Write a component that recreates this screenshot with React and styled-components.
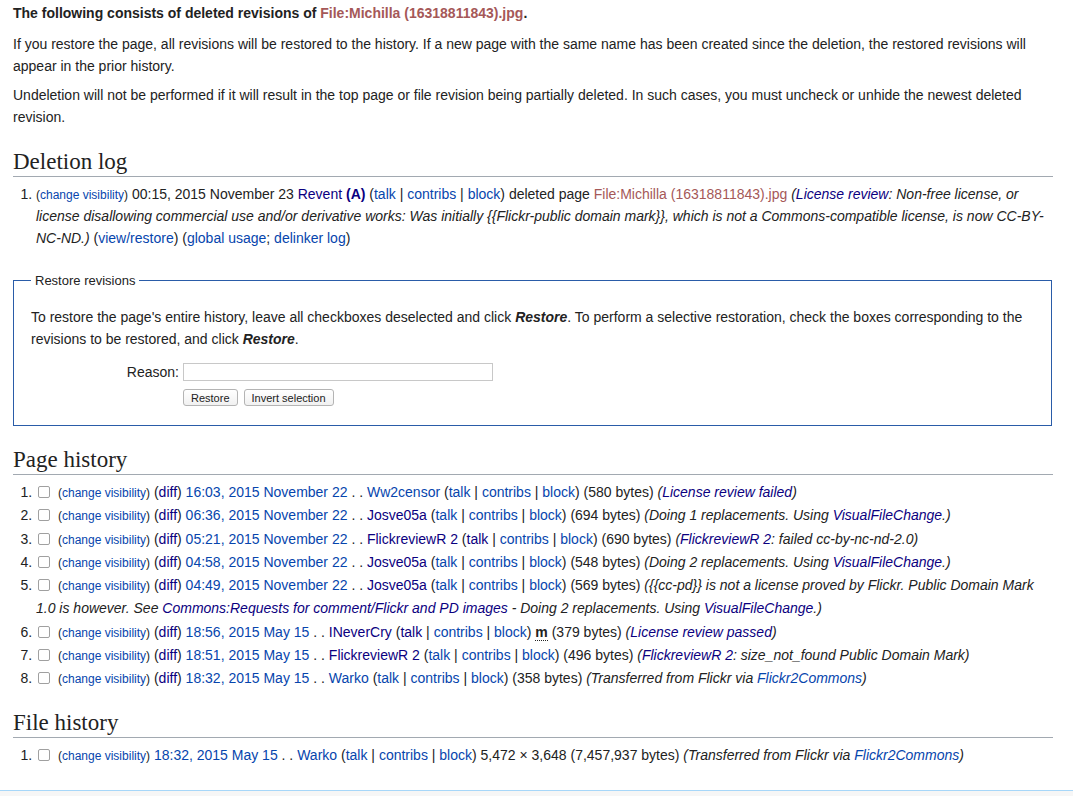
import React from "react";
import styled, { createGlobalStyle } from "styled-components";

const GlobalStyle = createGlobalStyle`
  body {
    margin: 0;
    background: #fff;
    color: #222;
    font-family: "Liberation Sans", Arial, sans-serif;
    font-size: 14px;
  }
`;

const Page = styled.div`
  min-height: 796px;
  display: flex;
  flex-direction: column;
`;

const Content = styled.div`
  padding: 2px 20px 0 13px;
`;

const Intro = styled.p`
  margin: 0 0 ${(p) => (p.$first ? "9px" : "7px")};
  line-height: 22px;
  font-weight: ${(p) => (p.$bold ? "bold" : "normal")};
`;

const Heading = styled.h2`
  font-family: "Liberation Serif", "Times New Roman", serif;
  font-weight: normal;
  font-size: 23px;
  line-height: 28px;
  margin: ${(p) => p.$top || "20px"} 0 6px;
  padding: 0;
  border-bottom: 1px solid #a2a9b1;
`;

const List = styled.ol`
  margin: 0;
  padding-left: 23px;
`;

const Item = styled.li`
  line-height: ${(p) => (p.$tall ? "23.25px" : "22px")};
`;

const A = styled.a`
  color: ${(p) => (p.$visited ? "#0b0080" : p.$red ? "#a55858" : "#0645ad")};
  text-decoration: none;
  font-weight: ${(p) => (p.$bold ? "bold" : "inherit")};
`;

const Small = styled.span`
  font-size: 12px;
  line-height: 1;
`;

const Summary = styled.span`
  font-style: italic;
`;

const Minor = styled.abbr`
  font-weight: bold;
  text-decoration: none;
  border-bottom: 1px dotted #222;
  line-height: 1;
`;

const Check = styled.span`
  display: inline-block;
  width: 10px;
  height: 10px;
  border: 1px solid #a0a0a0;
  border-radius: 2px;
  background: #fff;
  vertical-align: -1px;
  margin: 0 8px 0 2px;
`;

const Fieldset = styled.fieldset`
  margin: 24px 1px 0 0;
  border: 1px solid #2a5ca8;
  padding: 18px 17px 19px;
`;

const Legend = styled.legend`
  font-size: 13px;
  padding: 0 4px;
  margin-left: 0;
`;

const FieldText = styled.p`
  margin: 0 0 13px;
  line-height: 22px;
`;

const FormGrid = styled.div`
  display: grid;
  grid-template-columns: 148px auto;
  column-gap: 4px;
  row-gap: 8px;
  align-items: center;
`;

const Label = styled.label`
  text-align: right;
`;

const TextInput = styled.input`
  width: 306px;
  height: 14px;
  border: 1px solid #c8c8c8;
  padding: 1px;
  margin: 0;
`;

const Buttons = styled.div`
  grid-column: 2;
  display: flex;
  gap: 6px;
`;

const Button = styled.button`
  font-family: "Liberation Sans", Arial, sans-serif;
  font-size: 11px;
  height: 17px;
  padding: 0 7px;
  border: 1px solid #b4b4b4;
  border-radius: 3px;
  background: linear-gradient(#fff, #f1f1f1);
  color: #222;
`;

const Footer = styled.div`
  margin-top: auto;
  height: 5px;
  border-top: 1px solid #a7d7f9;
  background: #f6f6f6;
`;

const UserLinks = ({ talkVisited }) => (
  <>
    (<A href="#" $visited={talkVisited}>talk</A> | <A href="#">contribs</A> | <A href="#">block</A>)
  </>
);

const rows = [
  { time: "16:03, 2015 November 22", user: "Ww2censor", bytes: "580", summary: <>(<A href="#" $visited>License review failed</A>)</> },
  { time: "06:36, 2015 November 22", user: "Josve05a", uv: true, bytes: "694", summary: <>(Doing 1 replacements. Using <A href="#" $visited>VisualFileChange</A>.)</> },
  { time: "05:21, 2015 November 22", user: "FlickreviewR 2", uv: true, tv: true, bytes: "690", summary: <>(<A href="#" $visited>FlickreviewR 2</A>: failed cc-by-nc-nd-2.0)</> },
  { time: "04:58, 2015 November 22", user: "Josve05a", uv: true, bytes: "548", summary: <>(Doing 2 replacements. Using <A href="#" $visited>VisualFileChange</A>.)</> },
  {
    time: "04:49, 2015 November 22", user: "Josve05a", uv: true, bytes: "569",
    summary: <>({"{{cc-pd}}"} is not a license proved by Flickr. Public Domain Mark 1.0 is however. See <A href="#" $visited>Commons:Requests for comment/Flickr and PD images</A> - Doing 2 replacements. Using <A href="#" $visited>VisualFileChange</A>.)</>,
  },
  { time: "18:56, 2015 May 15", user: "INeverCry", uv: true, tv: true, minor: true, bytes: "379", summary: <>(<A href="#" $visited>License review passed</A>)</> },
  { time: "18:51, 2015 May 15", user: "FlickreviewR 2", uv: true, bytes: "496", summary: <>(<A href="#" $visited>FlickreviewR 2</A>: size_not_found Public Domain Mark)</> },
  { time: "18:32, 2015 May 15", user: "Warko", bytes: "358", summary: <>(Transferred from Flickr via <A href="#">Flickr2Commons</A>)</> },
];

export default function App() {
  return (
    <Page>
      <GlobalStyle />
      <Content>
        <Intro $bold $first>
          The following consists of deleted revisions of <A href="#" $red>File:Michilla (16318811843).jpg</A>.
        </Intro>
        <Intro>
          If you restore the page, all revisions will be restored to the history. If a new page with the same name has been created since the deletion, the restored revisions will appear in the prior history.
        </Intro>
        <Intro>
          Undeletion will not be performed if it will result in the top page or file revision being partially deleted. In such cases, you must uncheck or unhide the newest deleted revision.
        </Intro>

        <Heading>Deletion log</Heading>
        <List>
          <Item>
            <Small>(<A href="#">change visibility</A>)</Small> 00:15, 2015 November 23 <A href="#" $visited>Revent</A>{" "}
            <A href="#" $visited $bold>(A)</A> <UserLinks /> deleted page{" "}
            <A href="#" $red>File:Michilla (16318811843).jpg</A>{" "}
            <Summary>
              (<A href="#" $visited>License review</A>: Non-free license, or license disallowing commercial use and/or derivative works: Was initially {"{{Flickr-public domain mark}}"}, which is not a Commons-compatible license, is now CC-BY-NC-ND.)
            </Summary>{" "}
            (<A href="#">view/restore</A>) (<A href="#">global usage</A>; <A href="#">delinker log</A>)
          </Item>
        </List>

        <Fieldset>
          <Legend>Restore revisions</Legend>
          <FieldText>
            To restore the page's entire history, leave all checkboxes deselected and click <b><i>Restore</i></b>. To perform a selective restoration, check the boxes corresponding to the revisions to be restored, and click <b><i>Restore</i></b>.
          </FieldText>
          <FormGrid>
            <Label>Reason:</Label>
            <TextInput type="text" />
            <Buttons>
              <Button>Restore</Button>
              <Button>Invert selection</Button>
            </Buttons>
          </FormGrid>
        </Fieldset>

        <Heading>Page history</Heading>
        <List>
          {rows.map((r, i) => (
            <Item key={i} $tall>
              <Check />
              <Small>(<A href="#">change visibility</A>)</Small> (<A href="#" $visited>diff</A>) <A href="#">{r.time}</A> . .{" "}
              <A href="#" $visited={r.uv}>{r.user}</A> <UserLinks talkVisited={r.tv} />{" "}
              {r.minor && <><Minor title="minor edit">m</Minor> </>}({r.bytes} bytes) <Summary>{r.summary}</Summary>
            </Item>
          ))}
        </List>

        <Heading $top="19px">File history</Heading>
        <List>
          <Item $tall>
            <Check />
            <Small>(<A href="#">change visibility</A>)</Small> <A href="#">18:32, 2015 May 15</A> . . <A href="#">Warko</A> <UserLinks /> 5,472 × 3,648 (7,457,937 bytes){" "}
            <Summary>(Transferred from Flickr via <A href="#">Flickr2Commons</A>)</Summary>
          </Item>
        </List>
      </Content>
      <Footer />
    </Page>
  );
}
